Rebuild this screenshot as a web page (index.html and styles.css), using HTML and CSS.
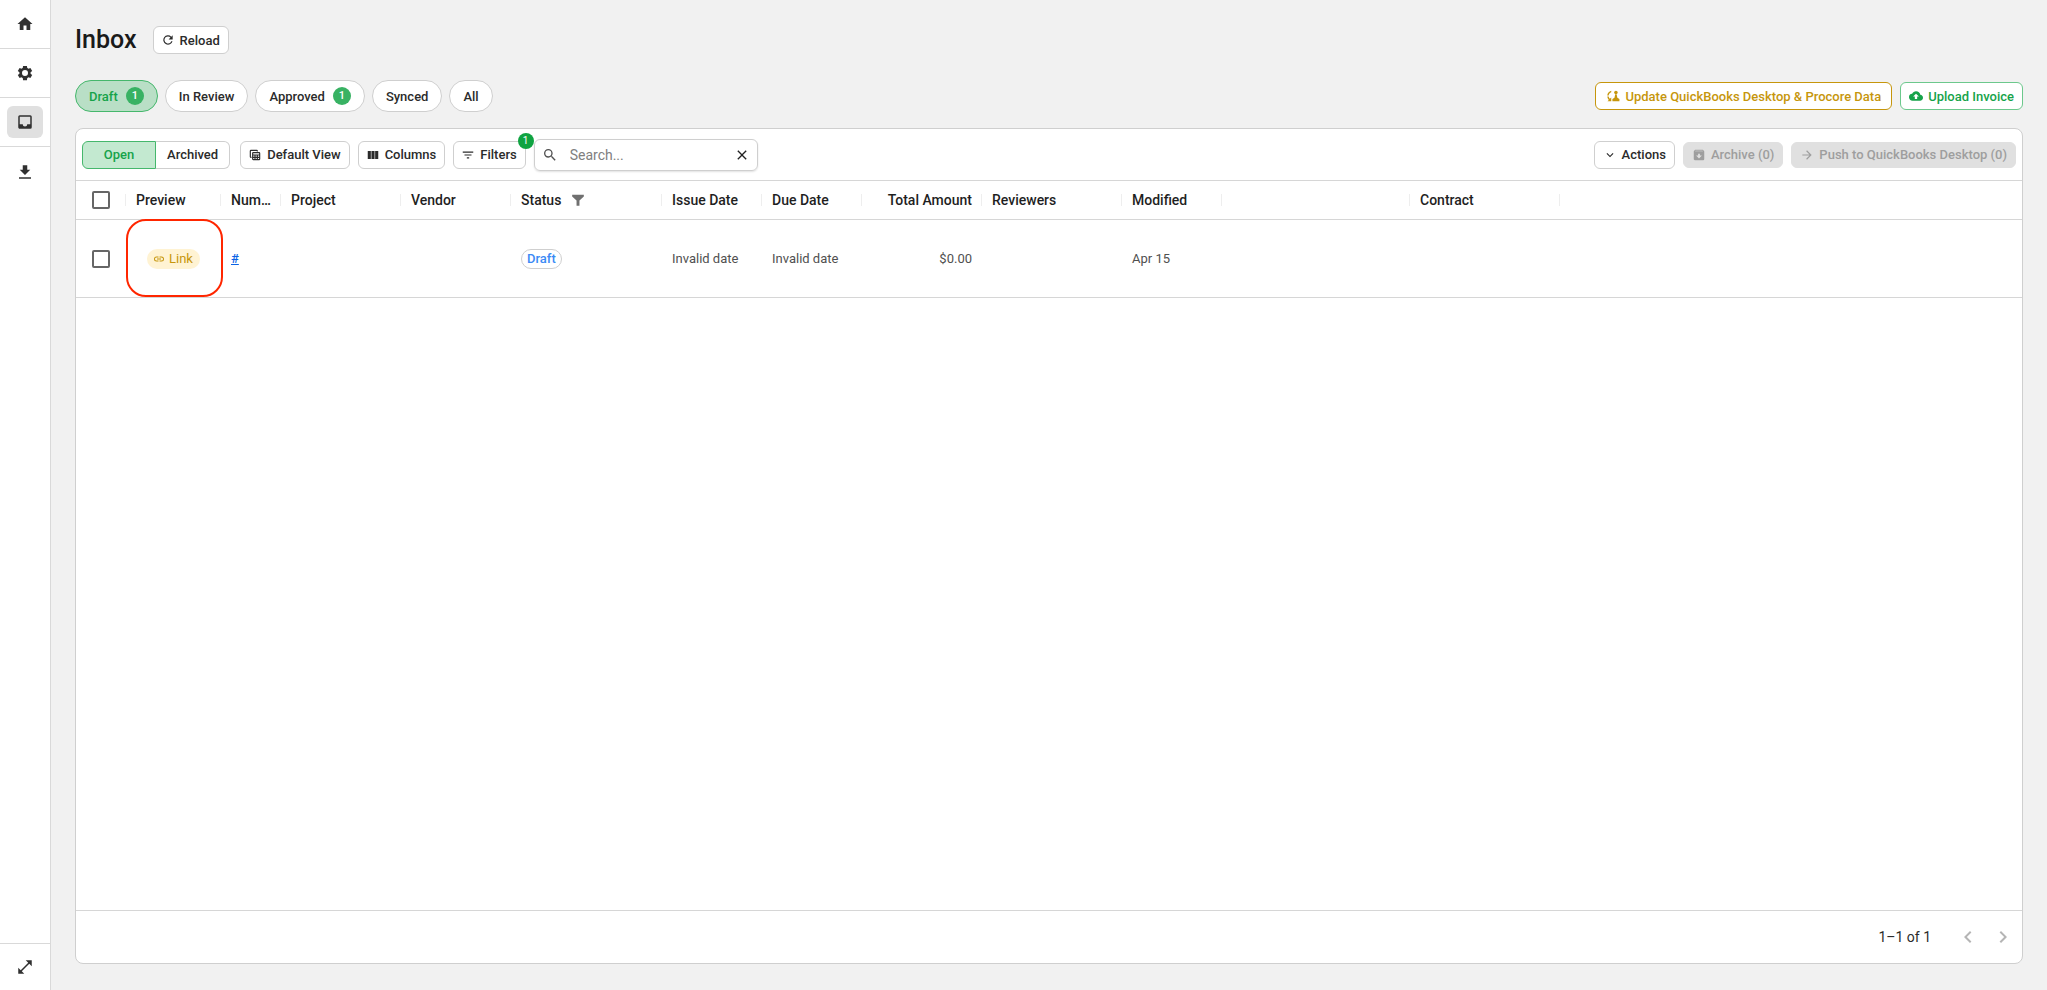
FILE: index.html
```html
<!DOCTYPE html>
<html lang="en">
<head>
  <meta charset="UTF-8">
  <meta name="viewport" content="width=device-width, initial-scale=1.0">
  <title>Inbox</title>
  <link rel="stylesheet" href="styles.css">
</head>
<body>

<!-- Sidebar -->
<nav class="sidebar">
  <div class="nav-item">
    <a href="#" aria-label="Home"><svg viewBox="0 0 24 24"><path d="M10 20v-6h4v6h5v-8h3L12 3 2 12h3v8z"/></svg></a>
  </div>
  <div class="nav-item">
    <a href="#" aria-label="Settings"><svg viewBox="0 0 24 24"><path fill-rule="evenodd" d="M19.5 12c0-.3 0-.6-.1-1l2.2-1.700-2.400-4.100-2.500 1c-.5-.4-1.100-.7-1.700-1L14.600 2.500H9.400L9 5.200c-.6.3-1.200.6-1.700 1l-2.500-1L2.400 9.300 4.600 11c-.1.4-.1.700-.1 1s0 .6.1 1l-2.200 1.700 2.400 4.100 2.500-1c.5.4 1.100.7 1.700 1l.4 2.700h5.200l.4-2.700c.6-.3 1.200-.6 1.700-1l2.500 1 2.400-4.100-2.200-1.700c.1-.4.1-.7.1-1zM12 16a4 4 0 1 1 0-8 4 4 0 0 1 0 8z"/></svg></a>
  </div>
  <div class="nav-item">
    <a href="#" class="active" aria-label="Inbox"><svg viewBox="0 0 24 24"><path fill-rule="evenodd" d="M19 3H5a2 2 0 0 0-2 2v14c0 1.100.9 2 2 2h14a2 2 0 0 0 2-2V5a2 2 0 0 0-2-2zm0 12h-4a3 3 0 0 1-6 0H5V5h14z"/></svg></a>
  </div>
  <div class="nav-item nav-last">
    <a href="#" aria-label="Downloads"><svg viewBox="0 0 24 24"><path d="M19 9h-4V3H9v6H5l7 7zM4 19h16v2H4z"/></svg></a>
  </div>
  <div class="nav-item nav-bottom">
    <button type="button" aria-label="Expand menu"><svg viewBox="0 0 24 24"><path d="M21 11V3h-8l3.300 3.300-10 10L3 13v8h8l-3.300-3.300 10-10z"/></svg></button>
  </div>
</nav>

<!-- Main Content -->
<main class="content">
  <header class="page-header">
    <h1>Inbox</h1>
    <button type="button" class="btn"><svg viewBox="0 0 24 24"><path d="M17.650 6.350A8 8 0 1 0 19.730 14h-2.080A6 6 0 1 1 12 6c1.660 0 3.140.69 4.220 1.780L13 11h7V4z"/></svg>Reload</button>
  </header>

  <div class="tabs-row">
    <div class="tabs">
      <button type="button" class="tab selected">Draft <span class="count">1</span></button>
      <button type="button" class="tab">In Review</button>
      <button type="button" class="tab">Approved <span class="count">1</span></button>
      <button type="button" class="tab">Synced</button>
      <button type="button" class="tab">All</button>
    </div>
    <div class="group">
      <button type="button" class="btn btn-gold"><svg viewBox="0 0 24 24"><path d="M9 3v2.500C6.500 6.500 4.800 8.600 4.600 11H2.200C2.500 7.100 5.200 4 9 3zM2.200 13h2.400c.2 1.500.9 2.800 1.900 3.900L9 14.500V21H2.500l2.300-2.300A9 9 0 0 1 2.200 13z"/><circle cx="17" cy="6" r="3"/><path d="M15.800 9h2.400l1.300 6 3.500 2v4H11v-4l3.500-2z"/></svg>Update QuickBooks Desktop &amp; Procore Data</button>
      <button type="button" class="btn btn-green"><svg viewBox="0 0 24 24"><path d="M19.350 10.040A7.490 7.490 0 0 0 12 4C9.110 4 6.600 5.640 5.350 8.040A5.994 5.994 0 0 0 0 14c0 3.310 2.690 6 6 6h13c2.760 0 5-2.240 5-5 0-2.640-2.050-4.780-4.650-4.960zM14 13v4h-4v-4H7l5-5 5 5z"/></svg>Upload Invoice</button>
    </div>
  </div>

  <section class="card">
    <div class="toolbar">
      <div class="segmented">
        <button type="button" class="btn on">Open</button>
        <button type="button" class="btn">Archived</button>
      </div>
      <div class="group">
        <button type="button" class="btn"><svg viewBox="0 0 24 24"><path fill-rule="evenodd" d="M19 7H9a2 2 0 0 0-2 2v10c0 1.100.9 2 2 2h10a2 2 0 0 0 2-2V9a2 2 0 0 0-2-2zm0 2v2H9V9zm-6 6v-2h2v2zm2 2v2h-2v-2zm-4-2H9v-2h2zm6-2h2v2h-2zm-8 4h2v2H9zm8 2v-2h2v2zM6 17H5a2 2 0 0 1-2-2V5a2 2 0 0 1 2-2h10a2 2 0 0 1 2 2v1h-2V5H5v10h1z"/></svg>Default View</button>
        <button type="button" class="btn"><svg viewBox="0 0 24 24"><path d="M14.670 5v14H9.330V5zM15.670 19H21V5h-5.330zM8.330 19V5H3v14z"/></svg>Columns</button>
        <div class="filters">
          <button type="button" class="btn"><svg viewBox="0 0 24 24"><path d="M10 18h4v-2h-4zM3 6v2h18V6zm3 7h12v-2H6z"/></svg>Filters</button>
          <span class="filter-badge">1</span>
        </div>
        <div class="search">
          <svg viewBox="0 0 24 24"><path fill-rule="evenodd" d="M15.500 14h-.79l-.28-.27A6.471 6.471 0 0 0 16 9.500 6.500 6.500 0 1 0 9.500 16c1.610 0 3.090-.59 4.230-1.570l.27.28v.79l5 4.990L20.490 19zm-6 0a4.500 4.500 0 1 1 0-9 4.500 4.500 0 0 1 0 9z"/></svg>
          <input type="text" placeholder="Search..." aria-label="Search">
          <button type="button" aria-label="Clear search"><svg viewBox="0 0 24 24"><path d="M19 6.410 17.590 5 12 10.590 6.410 5 5 6.410 10.590 12 5 17.590 6.410 19 12 13.410 17.590 19 19 17.590 13.410 12z"/></svg></button>
        </div>
      </div>
      <div class="group actions">
        <button type="button" class="btn"><svg viewBox="0 0 24 24"><path d="M7.400 8.600 12 13.200l4.600-4.600L18 10l-6 6-6-6z"/></svg>Actions</button>
        <button type="button" class="btn" disabled><svg viewBox="0 0 24 24"><path fill-rule="evenodd" d="M20.500 5.200 19.200 3.500A1.500 1.500 0 0 0 18 3H6c-.5 0-.9.2-1.200.5L3.500 5.200C3.200 5.600 3 6 3 6.500V19c0 1.100.9 2 2 2h14a2 2 0 0 0 2-2V6.500c0-.5-.2-.9-.5-1.300zM6 4.500h12l1 1H5zM10.500 10h3v3H17l-5 5-5-5h3.500z"/></svg>Archive (0)</button>
        <button type="button" class="btn" disabled><svg viewBox="0 0 24 24"><path d="m12 4-1.400 1.400 5.600 5.600H4v2h12.200l-5.600 5.600L12 20l8-8z"/></svg>Push to QuickBooks Desktop (0)</button>
      </div>
    </div>

    <!-- Invoice list -->
    <div class="table-wrap">
      <table>
        <colgroup>
          <col class="w-check"><col class="w-preview"><col class="w-number"><col class="w-project"><col class="w-vendor"><col class="w-status"><col class="w-date"><col class="w-date"><col class="w-project"><col class="w-reviewers"><col class="w-date"><col class="w-wide"><col class="w-contract"><col>
        </colgroup>
        <thead>
          <tr>
            <th class="check"><input type="checkbox" aria-label="Select all"></th>
            <th>Preview</th>
            <th>Number</th>
            <th>Project</th>
            <th>Vendor</th>
            <th><span class="sorted">Status <svg viewBox="0 0 24 24"><path d="M2 3h20v3l-7.500 7v9h-5v-9L2 6z"/></svg></span></th>
            <th>Issue Date</th>
            <th>Due Date</th>
            <th class="amount">Total Amount</th>
            <th>Reviewers</th>
            <th>Modified</th>
            <th></th>
            <th>Contract</th>
            <th></th>
          </tr>
        </thead>
        <tbody>
          <tr>
            <td class="check"><input type="checkbox" aria-label="Select invoice"></td>
            <td class="preview"><a href="#" class="link-chip"><svg viewBox="0 0 24 24"><path d="M3.900 12c0-1.710 1.390-3.100 3.100-3.100h4V7H7a5 5 0 0 0 0 10h4v-1.900H7c-1.710 0-3.100-1.390-3.100-3.100zM8 13h8v-2H8zm9-6h-4v1.900h4a3.100 3.100 0 0 1 0 6.200h-4V17h4a5 5 0 0 0 0-10z"/></svg>Link</a></td>
            <td><a href="#" class="number-link">#</a></td>
            <td></td>
            <td></td>
            <td><span class="status">Draft</span></td>
            <td>Invalid date</td>
            <td>Invalid date</td>
            <td class="amount">$0.00</td>
            <td></td>
            <td>Apr 15</td>
            <td></td>
            <td></td>
            <td></td>
          </tr>
        </tbody>
      </table>
    </div>

    <footer class="pager">
      <span>1–1 of 1</span>
      <div class="pager-buttons">
        <button type="button" aria-label="Previous page" disabled><svg viewBox="0 0 24 24"><path d="M15.410 7.410 14 6l-6 6 6 6 1.410-1.410L10.830 12z"/></svg></button>
        <button type="button" aria-label="Next page" disabled><svg viewBox="0 0 24 24"><path d="M10 6 8.590 7.410 13.170 12l-4.580 4.590L10 18l6-6z"/></svg></button>
      </div>
    </footer>
  </section>
</main>

</body>
</html>
```
FILE: styles.css
```css
* {
  box-sizing: border-box;
}

body {
  font-family: Roboto, "Liberation Sans", sans-serif;
  font-size: 13px;
  color: #2b2b2b;
  background-color: #f1f1f1;
  margin: 0;
  display: flex;
  min-height: 100vh;
}

button,
input {
  font: inherit;
  color: inherit;
}

button {
  cursor: pointer;
}

svg {
  display: block;
  flex: none;
  fill: currentColor;
}

/* Sidebar */
.sidebar {
  display: flex;
  flex-direction: column;
  flex: none;
  width: 51px;
  background-color: white;
  border-right: 1px solid #d9d9d9;
}

.nav-item {
  display: flex;
  align-items: center;
  justify-content: center;
  height: 49px;
  border-bottom: 1px solid #d9d9d9;
}

.nav-item a,
.nav-item button {
  display: flex;
  align-items: center;
  justify-content: center;
  width: 36px;
  height: 32px;
  padding: 0;
  border: none;
  border-radius: 6px;
  background: none;
  color: #303030;
}

.nav-item a.active {
  background-color: #e0e0e0;
}

.nav-item svg {
  width: 18px;
  height: 18px;
}

.nav-item.nav-last {
  border-bottom: none;
}

.nav-item.nav-bottom {
  margin-top: auto;
  height: 47px;
  border-top: 1px solid #d9d9d9;
  border-bottom: none;
}

/* Header */
.content {
  flex: 1;
  min-width: 0;
  display: flex;
  flex-direction: column;
  padding: 26px 24px;
}

.page-header {
  display: flex;
  align-items: center;
  gap: 16px;
  margin-bottom: 26px;
}

h1 {
  margin: 0;
  font-size: 25px;
  font-weight: 500;
  line-height: 28px;
  color: #1a1a1a;
}

.btn {
  display: flex;
  align-items: center;
  justify-content: center;
  gap: 5px;
  height: 28px;
  padding: 0 8px 0 7px;
  border: 1px solid #cfcfcf;
  border-radius: 6px;
  background-color: white;
  font-weight: 500;
  white-space: nowrap;
}

.btn svg {
  width: 14px;
  height: 14px;
}

.btn:hover {
  background-color: #f7f7f7;
}

.btn-gold {
  padding: 0 10px;
  color: #c6960c;
  border-color: #c6960c;
}

.btn-green {
  padding: 0 8px;
  color: #16a34a;
  border-color: #6cc88c;
}

.btn:disabled {
  height: 26px;
  border-color: #e0e0e0;
  background-color: #e0e0e0;
  color: #9e9e9e;
  cursor: default;
}

.group {
  display: flex;
  align-items: center;
  gap: 8px;
}

/* Tabs */
.tabs-row {
  display: flex;
  align-items: center;
  justify-content: space-between;
  margin-bottom: 16px;
}

.tabs {
  display: flex;
  gap: 7px;
}

.tab {
  display: flex;
  align-items: center;
  gap: 8px;
  height: 32px;
  padding: 0 13px;
  border: 1px solid #cfcfcf;
  border-radius: 16px;
  background-color: white;
  font-weight: 500;
}

.tab.selected {
  color: #16a34a;
  border-color: #45b76c;
  background-color: #b9dfc6;
}

.count {
  width: 18px;
  height: 18px;
  border-radius: 50%;
  background-color: #38b263;
  color: white;
  font-size: 11px;
  line-height: 18px;
  text-align: center;
}

/* Card */
.card {
  flex: 1;
  display: flex;
  flex-direction: column;
  border: 1px solid #cfcfcf;
  border-radius: 8px;
  background-color: white;
}

.toolbar {
  display: flex;
  align-items: center;
  gap: 10px;
  height: 52px;
  padding: 0 6px;
  border-bottom: 1px solid #d6d6d6;
}

.actions {
  margin-left: auto;
}

.actions .btn {
  padding: 0 8px;
}

.segmented {
  display: grid;
  grid-template-columns: 1fr 1fr;
}

.segmented .btn {
  border-left: none;
  border-radius: 0 6px 6px 0;
  padding: 0 11px;
}

.segmented .btn.on {
  color: #16a34a;
  border: 1px solid #45b76c;
  border-radius: 6px 0 0 6px;
  background-color: #c3e9d0;
}

.filters {
  position: relative;
}

.filter-badge {
  position: absolute;
  top: -8px;
  right: -8px;
  width: 16px;
  height: 16px;
  border-radius: 50%;
  background-color: #0fa341;
  color: white;
  font-size: 10px;
  line-height: 16px;
  text-align: center;
}

.search {
  display: flex;
  align-items: center;
  width: 224px;
  height: 32px;
  padding: 0 7px;
  border: 1px solid #cfcfcf;
  border-radius: 6px;
  box-shadow: 0 1px 2px rgba(0, 0, 0, 0.12);
}

.search svg {
  width: 16px;
  height: 16px;
  color: #505050;
}

.search input {
  flex: 1;
  min-width: 0;
  margin-left: 12px;
  padding: 0;
  border: none;
  outline: none;
  background: none;
  font-size: 14px;
}

.search input::placeholder {
  color: #808080;
}

.search button {
  padding: 0;
  border: none;
  background: none;
}

.search button svg {
  color: #222;
}

/* Table */
.table-wrap {
  flex: 1;
}

table {
  width: 100%;
  table-layout: fixed;
  border-collapse: separate;
  border-spacing: 0;
}

.w-check { width: 50px; }
.w-preview { width: 95px; }
.w-number { width: 60px; }
.w-project { width: 120px; }
.w-vendor { width: 110px; }
.w-status { width: 151px; }
.w-date { width: 100px; }
.w-reviewers { width: 140px; }
.w-wide { width: 188px; }
.w-contract { width: 150px; }

th,
td {
  padding: 0 10px;
  border-bottom: 1px solid #d6d6d6;
  text-align: left;
  white-space: nowrap;
  overflow: hidden;
  text-overflow: ellipsis;
}

th {
  height: 39px;
  font-size: 14px;
  font-weight: 500;
  color: #1f1f1f;
  background: linear-gradient(#eee, #eee) right center / 1px 12px no-repeat;
}

th:last-child {
  background: none;
}

td {
  height: 78px;
  color: #505050;
}

.amount {
  text-align: right;
}

.check {
  padding: 0 0 0 16px;
}

.check input {
  appearance: none;
  display: block;
  width: 18px;
  height: 18px;
  margin: 0;
  border: 2px solid #666;
  border-radius: 2px;
}

.check input:checked {
  background-color: #16a34a;
  border-color: #16a34a;
}

.sorted {
  display: flex;
  align-items: center;
  gap: 10px;
}

.sorted svg {
  width: 14px;
  height: 14px;
  color: #707070;
}

.preview {
  position: relative;
  overflow: visible;
  text-align: center;
}

/* red callout round the preview cell */
.preview::after {
  content: "";
  position: absolute;
  inset: -1px -2px 0 0;
  border: 2px solid #ff2600;
  border-radius: 20px;
  pointer-events: none;
}

.link-chip {
  display: inline-flex;
  align-items: center;
  gap: 4px;
  height: 20px;
  padding: 0 7px 0 6px;
  border-radius: 10px;
  background-color: #fff3d3;
  color: #c6960c;
  text-decoration: none;
}

.link-chip svg {
  width: 12px;
  height: 12px;
}

.number-link {
  color: #0b63e5;
  font-weight: 500;
}

.status {
  display: inline-block;
  height: 20px;
  padding: 0 5px;
  border: 1px solid #cfcfcf;
  border-radius: 10px;
  color: #3b8af5;
  font-weight: 500;
  line-height: 18px;
}

/* Pager */
.pager {
  display: flex;
  align-items: center;
  justify-content: flex-end;
  gap: 25px;
  height: 53px;
  padding-right: 7px;
  border-top: 1px solid #d6d6d6;
  font-size: 14px;
}

.pager-buttons {
  display: flex;
  gap: 11px;
}

.pager-buttons button {
  padding: 0;
  border: none;
  background: none;
  color: #b5b5b5;
}

.pager-buttons svg {
  width: 24px;
  height: 24px;
}
```
